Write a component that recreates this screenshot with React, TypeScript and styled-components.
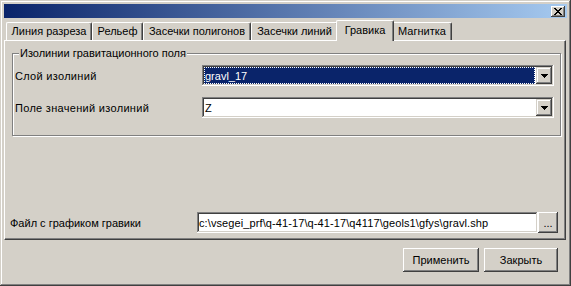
import * as React from 'react';
import styled, { createGlobalStyle } from 'styled-components';

const GlobalStyle = createGlobalStyle`
    html, body {
        margin: 0;
        padding: 0;
        background: #d4d0c8;
    }
    * {
        box-sizing: border-box;
    }
`;

const FONT = `'Liberation Sans', Arial, sans-serif`;

const Window = styled.div`
    width: 571px;
    height: 286px;
    padding: 4px;
    display: flex;
    flex-direction: column;
    background: #d4d0c8;
    font-family: ${FONT};
    font-size: 11px;
    color: #000;
    box-shadow: inset -1px -1px #404040, inset 1px 1px #d4d0c8,
        inset -2px -2px #808080, inset 2px 2px #fff;
`;

const TitleBar = styled.div`
    height: 14px;
    display: flex;
    align-items: center;
    justify-content: flex-end;
    padding-right: 2px;
    background: linear-gradient(to right, #0a246a, #a6caf0);
`;

const CloseButton = styled.button`
    width: 14px;
    height: 11px;
    padding: 0;
    border: none;
    display: flex;
    align-items: center;
    justify-content: center;
    background: #d4d0c8;
    box-shadow: inset -1px -1px #404040, inset 1px 1px #fff,
        inset -2px -2px #808080;
`;

const TabStrip = styled.div`
    display: flex;
    align-items: flex-end;
    height: 20px;
    margin-top: 2px;
    padding-left: 2px;
    position: relative;
    z-index: 1;
`;

const Tab = styled.div<{ $active?: boolean; $width: number }>`
    width: ${(p) => p.$width + (p.$active ? 4 : 0)}px;
    height: ${(p) => (p.$active ? 21 : 18)}px;
    margin-bottom: ${(p) => (p.$active ? -1 : 0)}px;
    margin-left: ${(p) => (p.$active ? -2 : 0)}px;
    margin-right: ${(p) => (p.$active ? -2 : 0)}px;
    padding-top: ${(p) => (p.$active ? 3 : 2)}px;
    display: flex;
    justify-content: center;
    align-items: flex-start;
    white-space: nowrap;
    background: #d4d0c8;
    border-top: 1px solid #fff;
    border-left: 1px solid #fff;
    border-right: 1px solid #404040;
    border-top-left-radius: 2px;
    border-top-right-radius: 2px;
    box-shadow: inset -1px 0 #808080;
    line-height: 13px;
    position: relative;
    z-index: ${(p) => (p.$active ? 2 : 1)};
`;

const Panel = styled.div`
    height: 200px;
    margin-right: 1px;
    display: flex;
    flex-direction: column;
    border-top: 1px solid #fff;
    border-left: 1px solid #fff;
    border-right: 1px solid #404040;
    border-bottom: 1px solid #404040;
    box-shadow: inset -1px -1px #808080;
    padding: 0 6px 6px 5px;
`;

const GroupBox = styled.fieldset`
    margin: 6px 0 0 2px;
    padding: 5px 6px 17px 2px;
    width: 549px;
    min-width: 0;
    border: 1px solid #808080;
    box-shadow: inset 1px 1px 0 #fff, 1px 1px 0 #fff;
    display: grid;
    grid-template-columns: 187px 352px;
    row-gap: 11px;
    align-items: center;
`;

const Legend = styled.legend`
    padding: 0 1px;
    margin-left: 4px;
    background: #d4d0c8;
    line-height: 13px;
`;

const Label = styled.span`
    white-space: nowrap;
    letter-spacing: 0.3px;
`;

const Combo = styled.div`
    height: 21px;
    display: flex;
    padding: 2px;
    background: #fff;
    box-shadow: inset -1px -1px #fff, inset 1px 1px #808080,
        inset -2px -2px #d4d0c8, inset 2px 2px #404040;
`;

const ComboValue = styled.div<{ $selected?: boolean }>`
    flex: 1;
    display: flex;
    align-items: center;
    padding-left: 1px;
    margin-right: 1px;
    background: ${(p) => (p.$selected ? '#0a246a' : '#fff')};
    color: ${(p) => (p.$selected ? '#fff' : '#000')};
    outline: ${(p) => (p.$selected ? '1px dotted #fff' : 'none')};
    outline-offset: -1px;
`;

const DropButton = styled.div`
    width: 16px;
    height: 17px;
    display: flex;
    align-items: center;
    justify-content: center;
    background: #d4d0c8;
    box-shadow: inset -1px -1px #404040, inset 1px 1px #d4d0c8,
        inset -2px -2px #808080, inset 2px 2px #fff;
`;

const FileRow = styled.div`
    margin-top: auto;
    display: flex;
    align-items: center;
`;

const FileLabel = styled.span`
    width: 187px;
    white-space: nowrap;
`;

const TextInput = styled.div`
    width: 341px;
    height: 21px;
    padding: 1px 0 0 2px;
    display: flex;
    align-items: center;
    white-space: nowrap;
    overflow: hidden;
    letter-spacing: 0.1px;
    background: #fff;
    box-shadow: inset -1px -1px #fff, inset 1px 1px #808080,
        inset -2px -2px #d4d0c8, inset 2px 2px #404040;
`;

const Button = styled.button<{ $width: number; $height: number }>`
    width: ${(p) => p.$width}px;
    height: ${(p) => p.$height}px;
    padding: 0;
    border: none;
    font-family: ${FONT};
    font-size: 11px;
    color: #000;
    background: #d4d0c8;
    box-shadow: inset -1px -1px #404040, inset 1px 1px #fff,
        inset -2px -2px #808080, inset 2px 2px #d4d0c8;
`;

const Footer = styled.div`
    display: flex;
    justify-content: flex-end;
    gap: 5px;
    padding: 8px 9px 0 0;
`;

const Arrow = () => (
    <svg width="7" height="4" viewBox="0 0 7 4">
        <path d="M0 0h7v1h-1v1h-1v1h-1v1h-1v-1h-1v-1h-1v-1h-1z" fill="#000" />
    </svg>
);

const CloseIcon = () => (
    <svg width="8" height="7" viewBox="0 0 8 7">
        <path
            d="M0 0h2v1h1v1h2v-1h1v-1h2v1h-1v1h-1v1h-1v1h1v1h1v1h1v1h-2v-1h-1v-1h-2v1h-1v1h-2v-1h1v-1h1v-1h1v-1h-1v-1h-1v-1h-1z"
            fill="#000"
        />
    </svg>
);

const tabs = [
    { title: 'Линия разреза', width: 86 },
    { title: 'Рельеф', width: 51 },
    { title: 'Засечки полигонов', width: 108 },
    { title: 'Засечки линий', width: 87 },
    { title: 'Гравика', width: 54, active: true },
    { title: 'Магнитка', width: 60 },
];

export default function App() {
    return (
        <>
            <GlobalStyle />
            <Window>
                <TitleBar>
                    <CloseButton type="button">
                        <CloseIcon />
                    </CloseButton>
                </TitleBar>
                <TabStrip>
                    {tabs.map((t) => (
                        <Tab key={t.title} $active={t.active} $width={t.width}>
                            {t.title}
                        </Tab>
                    ))}
                </TabStrip>
                <Panel>
                    <GroupBox>
                        <Legend>Изолинии гравитационного поля</Legend>
                        <Label>Слой изолиний</Label>
                        <Combo>
                            <ComboValue $selected>gravl_17</ComboValue>
                            <DropButton>
                                <Arrow />
                            </DropButton>
                        </Combo>
                        <Label>Поле значений изолиний</Label>
                        <Combo>
                            <ComboValue>Z</ComboValue>
                            <DropButton>
                                <Arrow />
                            </DropButton>
                        </Combo>
                    </GroupBox>
                    <FileRow>
                        <FileLabel>Файл с графиком гравики</FileLabel>
                        <TextInput>
                            c:\vsegei_prf\q-41-17\q-41-17\q4117\geols1\gfys\gravl.shp
                        </TextInput>
                        <Button type="button" $width={20} $height={21}>
                            ...
                        </Button>
                    </FileRow>
                </Panel>
                <Footer>
                    <Button type="button" $width={76} $height={24}>
                        Применить
                    </Button>
                    <Button type="button" $width={74} $height={24}>
                        Закрыть
                    </Button>
                </Footer>
            </Window>
        </>
    );
}
